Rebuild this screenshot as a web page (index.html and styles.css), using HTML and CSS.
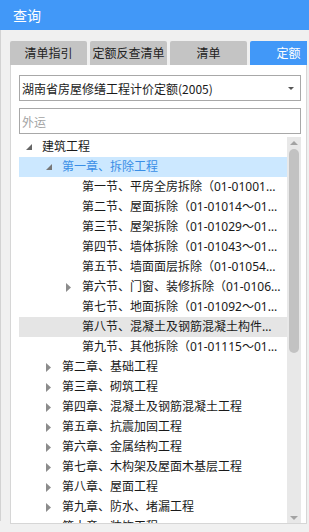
FILE: index.html
```html
<!DOCTYPE html>
<html lang="zh-CN">
<head>
  <meta charset="UTF-8">
  <meta name="viewport" content="width=device-width, initial-scale=1.0">
  <title>查询</title>
  <link rel="stylesheet" href="styles.css">
</head>
<body>
  <div class="window">
    <header class="titlebar">查询</header>
    <div class="content">
      <!-- Tabs -->
      <nav class="tabs">
        <div class="tab">清单指引</div>
        <div class="tab">定额反查清单</div>
        <div class="tab">清单</div>
        <div class="tab active">定额</div>
      </nav>

      <main class="panel">
        <div class="select">
          <span>湖南省房屋修缮工程计价定额(2005)</span>
          <svg class="caret" width="6" height="3" viewBox="0 0 6 3"><path d="M0 0H6L3 3Z" fill="#555"/></svg>
        </div>
        <input class="search" type="text" placeholder="外运">

        <!-- Tree -->
        <div class="tree">
          <ul class="list">
            <li class="row lv0"><span class="tw"><svg width="6" height="6" viewBox="0 0 6 6"><path d="M6 0V6H0Z" fill="#666"/></svg></span><span class="label">建筑工程</span></li>
            <li class="row lv1 selected"><span class="tw"><svg width="6" height="6" viewBox="0 0 6 6"><path d="M6 0V6H0Z" fill="#777"/></svg></span><span class="label">第一章、拆除工程</span></li>
            <li class="row lv2"><span class="tw"></span><span class="label">第一节、平房全房拆除（01-01001～01-01013）</span></li>
            <li class="row lv2"><span class="tw"></span><span class="label">第二节、屋面拆除（01-01014～01-01028）</span></li>
            <li class="row lv2"><span class="tw"></span><span class="label">第三节、屋架拆除（01-01029～01-01042）</span></li>
            <li class="row lv2"><span class="tw"></span><span class="label">第四节、墙体拆除（01-01043～01-01053）</span></li>
            <li class="row lv2"><span class="tw"></span><span class="label">第五节、墙面面层拆除（01-01054～01-01060）</span></li>
            <li class="row lv2"><span class="tw"><svg width="5" height="9" viewBox="0 0 5 9"><path d="M0 0L5 4.5L0 9Z" fill="#8c8c8c"/></svg></span><span class="label">第六节、门窗、装修拆除（01-01061～01-01091）</span></li>
            <li class="row lv2"><span class="tw"></span><span class="label">第七节、地面拆除（01-01092～01-01105）</span></li>
            <li class="row lv2 hover"><span class="tw"></span><span class="label">第八节、混凝土及钢筋混凝土构件拆除（01-01106～01-01114）</span></li>
            <li class="row lv2"><span class="tw"></span><span class="label">第九节、其他拆除（01-01115～01-01120）</span></li>
            <li class="row lv1"><span class="tw"><svg width="5" height="9" viewBox="0 0 5 9"><path d="M0 0L5 4.5L0 9Z" fill="#8c8c8c"/></svg></span><span class="label">第二章、基础工程</span></li>
            <li class="row lv1"><span class="tw"><svg width="5" height="9" viewBox="0 0 5 9"><path d="M0 0L5 4.5L0 9Z" fill="#8c8c8c"/></svg></span><span class="label">第三章、砌筑工程</span></li>
            <li class="row lv1"><span class="tw"><svg width="5" height="9" viewBox="0 0 5 9"><path d="M0 0L5 4.5L0 9Z" fill="#8c8c8c"/></svg></span><span class="label">第四章、混凝土及钢筋混凝土工程</span></li>
            <li class="row lv1"><span class="tw"><svg width="5" height="9" viewBox="0 0 5 9"><path d="M0 0L5 4.5L0 9Z" fill="#8c8c8c"/></svg></span><span class="label">第五章、抗震加固工程</span></li>
            <li class="row lv1"><span class="tw"><svg width="5" height="9" viewBox="0 0 5 9"><path d="M0 0L5 4.5L0 9Z" fill="#8c8c8c"/></svg></span><span class="label">第六章、金属结构工程</span></li>
            <li class="row lv1"><span class="tw"><svg width="5" height="9" viewBox="0 0 5 9"><path d="M0 0L5 4.5L0 9Z" fill="#8c8c8c"/></svg></span><span class="label">第七章、木构架及屋面木基层工程</span></li>
            <li class="row lv1"><span class="tw"><svg width="5" height="9" viewBox="0 0 5 9"><path d="M0 0L5 4.5L0 9Z" fill="#8c8c8c"/></svg></span><span class="label">第八章、屋面工程</span></li>
            <li class="row lv1"><span class="tw"><svg width="5" height="9" viewBox="0 0 5 9"><path d="M0 0L5 4.5L0 9Z" fill="#8c8c8c"/></svg></span><span class="label">第九章、防水、堵漏工程</span></li>
            <li class="row lv1"><span class="tw"><svg width="5" height="9" viewBox="0 0 5 9"><path d="M0 0L5 4.5L0 9Z" fill="#8c8c8c"/></svg></span><span class="label">第十章、装饰工程</span></li>
          </ul>
          <div class="scrollbar">
            <svg class="sb-arrow" width="8" height="4" viewBox="0 0 8 4"><path d="M0 4L4 0L8 4Z" fill="#a3a3a3"/></svg>
            <div class="thumb"></div>
            <div class="sb-space"></div>
            <svg class="sb-arrow down" width="8" height="4" viewBox="0 0 8 4"><path d="M0 0H8L4 4Z" fill="#a3a3a3"/></svg>
          </div>
        </div>
      </main>
    </div>
  </div>
</body>
</html>
```

FILE: styles.css
```css
/* Global */
body {
  margin: 0;
  background: #f0f0f0;
  font-family: "Noto Sans CJK SC", "Microsoft YaHei", sans-serif;
  font-size: 12px;
  color: #1a1a1a;
}
.window {
  width: 309px;
  height: 532px;
  overflow: hidden;
}
/* Title bar */
.titlebar {
  height: 30px;
  line-height: 30px;
  padding-left: 13px;
  background: #4198f8;
  color: #fff;
  font-size: 14px;
}
.content {
  padding: 11px 0 0 10px;
  box-shadow: inset 1px 0 #d2d2d2;
  height: 491px;
  box-sizing: border-box;
}
/* Tabs */
.tabs {
  display: flex;
  gap: 3px;
  width: 297px;
  height: 24px;
  overflow: hidden;
}
.tab {
  flex: 0 0 77px;
  background: #c4c4c4;
  border-radius: 2px 2px 0 0;
  text-align: center;
  line-height: 24px;
  color: #222;
}
.tab.active {
  background: #4198f8;
  color: #fff;
}
/* Panel */
.panel {
  display: block;
  width: 297px;
  height: 459px;
  box-sizing: border-box;
  background: #fff;
  border: 1px solid #d6d6d6;
  border-top: 0;
  padding: 10px 5px 0 8px;
}
.select {
  display: flex;
  align-items: center;
  justify-content: space-between;
  height: 26px;
  box-sizing: border-box;
  border: 1px solid #a8a8a8;
  padding: 0 6px 0 2px;
  color: #1a1a1a;
}
.caret {
  margin-top: 1px;
}
.search {
  display: block;
  width: 100%;
  height: 26px;
  box-sizing: border-box;
  margin: 7px 0 0;
  border: 1px solid #a8a8a8;
  padding: 0 2px;
  font: inherit;
  outline: none;
}
.search::placeholder {
  color: #a3a3a3;
}
/* Tree */
.tree {
  display: flex;
  margin-top: 3px;
  height: 386px;
  overflow: hidden;
}
.list {
  flex: 1;
  min-width: 0;
  list-style: none;
  margin: 0;
  padding: 0;
  font-family: "Noto Sans", "Noto Sans CJK SC", sans-serif;
}
.row {
  display: flex;
  align-items: center;
  height: 20px;
  line-height: 20px;
  padding-right: 6px;
  white-space: nowrap;
}
.row.lv1 { padding-left: 20px; }
.row.lv2 { padding-left: 40px; }
.row.selected {
  background: #cce8ff;
  color: #3a8ee6;
}
.row.hover {
  background: #e5e5e5;
}
.tw {
  flex: 0 0 23px;
  box-sizing: border-box;
  padding-left: 7px;
  display: flex;
  align-items: center;
  height: 20px;
}
.label {
  overflow: hidden;
  text-overflow: ellipsis;
  min-width: 0;
}
/* Scrollbar */
.scrollbar {
  flex: 0 0 14px;
  display: flex;
  flex-direction: column;
  align-items: center;
  background: #e8e8e8;
}
.sb-arrow {
  margin-top: 4px;
  flex: none;
}
.sb-arrow.down {
  margin: 0 0 3px;
}
.thumb {
  margin-top: 4px;
  width: 10px;
  height: 204px;
  border-radius: 5px;
  background: #c2c2c2;
}
.sb-space {
  flex: 1;
}
```
